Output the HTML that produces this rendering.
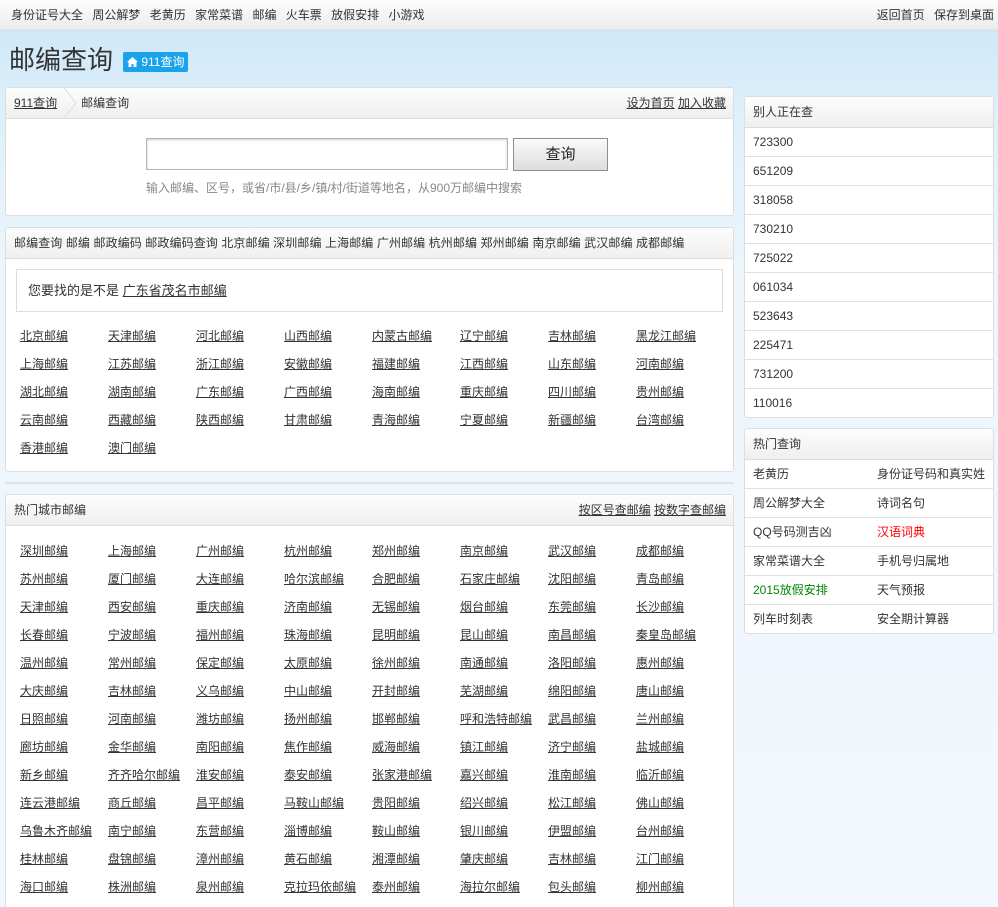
<!DOCTYPE html>
<html><head><meta charset="utf-8"><style>
*{margin:0;padding:0;box-sizing:border-box}
html,body{width:998px;height:907px;overflow:hidden}
body{font:12px/1.5 "Liberation Sans","Noto Sans CJK SC",sans-serif;color:#333;background:linear-gradient(180deg,#cfe8f8 30px,#dff0fb 120px,#eef6fd 300px,#f0f7fd 100%);position:relative}
a{color:#333;text-decoration:underline}
.top{position:absolute;left:0;top:0;width:998px;height:30px;background:linear-gradient(#fdfdfd,#ececec);border-bottom:1px solid #e2e2e2;line-height:30px;font-size:12px}
.top .l{position:absolute;left:11px}.top .l span{margin-right:6px}
.top .r{position:absolute;right:4px}.top .r span{margin-left:6px}
h1{position:absolute;left:9px;top:41px;font-size:26px;font-weight:normal;color:#333;line-height:38px}
.badge{position:absolute;left:123px;top:52px;background:#1aa3ea;color:#fff;font-size:12px;line-height:20px;height:20px;padding:0 4px;border-radius:2px}
.panel{position:absolute;background:#fff;border:1px solid #ddd;border-radius:3px;overflow:hidden}
.hd{height:31px;line-height:30px;background:linear-gradient(#fdfdfd,#efefef);border-bottom:1px solid #ddd;padding:0 8px;position:relative;white-space:nowrap}
.hd .rt{position:absolute;right:7px;top:0}
.grid{padding:0 0 0 14px}
.grid a{float:left;width:88px;height:28px;line-height:28px;white-space:nowrap}
.list div{height:29px;line-height:29px;border-bottom:1px solid #e2e2e2;padding-left:8px;font-size:12px}
.list div:last-child{border-bottom:0}
.hot .list div{display:flex}.hot span{width:124px;flex-shrink:0;white-space:nowrap}
</style></head><body>
<div class="top"><div class="l"><span>身份证号大全</span> <span>周公解梦</span> <span>老黄历</span> <span>家常菜谱</span> <span>邮编</span> <span>火车票</span> <span>放假安排</span> <span>小游戏</span></div><div class="r"><span>返回首页</span> <span>保存到桌面</span></div></div>
<h1>邮编查询</h1>
<div class="badge"><svg width="11" height="10" viewBox="0 0 11 10" style="vertical-align:-1px"><path d="M5.5 0L0 5h1.5v5h3V7h2v3h3V5H11z" fill="#fff"/></svg> 911查询</div>

<div class="panel" style="left:5px;top:87px;width:729px;height:129px">
<div class="hd"><a>911查询</a><svg width="14" height="30" style="vertical-align:top;margin-left:6px"><path d="M1 0L13 15L1 30" fill="none" stroke="#ddd"/></svg><span style="margin-left:4px">邮编查询</span><span class="rt"><a>设为首页</a> <a>加入收藏</a></span></div>
<div style="position:absolute;left:140px;top:50px;width:362px;height:32px;border:1px solid #b5b5b5;box-shadow:inset 0 1px 2px #ccc"></div>
<div style="position:absolute;left:507px;top:50px;width:95px;height:33px;border:1px solid #8e8e8e;background:linear-gradient(#fafafa,#ddd);text-align:center;line-height:31px;font-size:15px;color:#222">查询</div>
<div style="position:absolute;left:140px;top:91px;color:#888;font-size:12px">输入邮编、区号，或省/市/县/乡/镇/村/街道等地名，从900万邮编中搜索</div>
</div>

<div class="panel" style="left:5px;top:227px;width:729px;height:245px">
<div class="hd" style="font-size:12px;letter-spacing:0.1px">邮编查询 邮编 邮政编码 邮政编码查询 北京邮编 深圳邮编 上海邮编 广州邮编 杭州邮编 郑州邮编 南京邮编 武汉邮编 成都邮编</div>
<div style="margin:10px 10px 0 10px;height:43px;border:1px solid #ddd;line-height:41px;padding-left:11px;font-size:13px">您要找的是不是 <a>广东省茂名市邮编</a></div>
<div class="grid" style="padding-top:10px">
<a>北京邮编</a><a>天津邮编</a><a>河北邮编</a><a>山西邮编</a><a>内蒙古邮编</a><a>辽宁邮编</a><a>吉林邮编</a><a>黑龙江邮编</a>
<a>上海邮编</a><a>江苏邮编</a><a>浙江邮编</a><a>安徽邮编</a><a>福建邮编</a><a>江西邮编</a><a>山东邮编</a><a>河南邮编</a>
<a>湖北邮编</a><a>湖南邮编</a><a>广东邮编</a><a>广西邮编</a><a>海南邮编</a><a>重庆邮编</a><a>四川邮编</a><a>贵州邮编</a>
<a>云南邮编</a><a>西藏邮编</a><a>陕西邮编</a><a>甘肃邮编</a><a>青海邮编</a><a>宁夏邮编</a><a>新疆邮编</a><a>台湾邮编</a>
<a>香港邮编</a><a>澳门邮编</a>
</div></div>

<div style="position:absolute;left:5px;top:482px;width:729px;height:2px;background:#dde3e8"></div>

<div class="panel" style="left:5px;top:494px;width:729px;height:420px">
<div class="hd">热门城市邮编<span class="rt"><a>按区号查邮编</a> <a>按数字查邮编</a></span></div>
<div class="grid" style="padding-top:11px">
<a>深圳邮编</a><a>上海邮编</a><a>广州邮编</a><a>杭州邮编</a><a>郑州邮编</a><a>南京邮编</a><a>武汉邮编</a><a>成都邮编</a>
<a>苏州邮编</a><a>厦门邮编</a><a>大连邮编</a><a>哈尔滨邮编</a><a>合肥邮编</a><a>石家庄邮编</a><a>沈阳邮编</a><a>青岛邮编</a>
<a>天津邮编</a><a>西安邮编</a><a>重庆邮编</a><a>济南邮编</a><a>无锡邮编</a><a>烟台邮编</a><a>东莞邮编</a><a>长沙邮编</a>
<a>长春邮编</a><a>宁波邮编</a><a>福州邮编</a><a>珠海邮编</a><a>昆明邮编</a><a>昆山邮编</a><a>南昌邮编</a><a>秦皇岛邮编</a>
<a>温州邮编</a><a>常州邮编</a><a>保定邮编</a><a>太原邮编</a><a>徐州邮编</a><a>南通邮编</a><a>洛阳邮编</a><a>惠州邮编</a>
<a>大庆邮编</a><a>吉林邮编</a><a>义乌邮编</a><a>中山邮编</a><a>开封邮编</a><a>芜湖邮编</a><a>绵阳邮编</a><a>唐山邮编</a>
<a>日照邮编</a><a>河南邮编</a><a>潍坊邮编</a><a>扬州邮编</a><a>邯郸邮编</a><a>呼和浩特邮编</a><a>武昌邮编</a><a>兰州邮编</a>
<a>廊坊邮编</a><a>金华邮编</a><a>南阳邮编</a><a>焦作邮编</a><a>威海邮编</a><a>镇江邮编</a><a>济宁邮编</a><a>盐城邮编</a>
<a>新乡邮编</a><a>齐齐哈尔邮编</a><a>淮安邮编</a><a>泰安邮编</a><a>张家港邮编</a><a>嘉兴邮编</a><a>淮南邮编</a><a>临沂邮编</a>
<a>连云港邮编</a><a>商丘邮编</a><a>昌平邮编</a><a>马鞍山邮编</a><a>贵阳邮编</a><a>绍兴邮编</a><a>松江邮编</a><a>佛山邮编</a>
<a>乌鲁木齐邮编</a><a>南宁邮编</a><a>东营邮编</a><a>淄博邮编</a><a>鞍山邮编</a><a>银川邮编</a><a>伊盟邮编</a><a>台州邮编</a>
<a>桂林邮编</a><a>盘锦邮编</a><a>漳州邮编</a><a>黄石邮编</a><a>湘潭邮编</a><a>肇庆邮编</a><a>吉林邮编</a><a>江门邮编</a>
<a>海口邮编</a><a>株洲邮编</a><a>泉州邮编</a><a>克拉玛依邮编</a><a>泰州邮编</a><a>海拉尔邮编</a><a>包头邮编</a><a>柳州邮编</a>
</div></div>

<div class="panel" style="left:744px;top:96px;width:250px;height:322px">
<div class="hd">别人正在查</div>
<div class="list"><div>723300</div><div>651209</div><div>318058</div><div>730210</div><div>725022</div><div>061034</div><div>523643</div><div>225471</div><div>731200</div><div>110016</div></div>
</div>

<div class="panel hot" style="left:744px;top:428px;width:250px;height:206px">
<div class="hd">热门查询</div>
<div class="list">
<div><span>老黄历</span><span>身份证号码和真实姓</span></div>
<div><span>周公解梦大全</span><span>诗词名句</span></div>
<div><span>QQ号码测吉凶</span><span style="color:#f00">汉语词典</span></div>
<div><span>家常菜谱大全</span><span>手机号归属地</span></div>
<div><span style="color:#080">2015放假安排</span><span>天气预报</span></div>
<div><span>列车时刻表</span><span>安全期计算器</span></div>
</div></div>
</body></html>
